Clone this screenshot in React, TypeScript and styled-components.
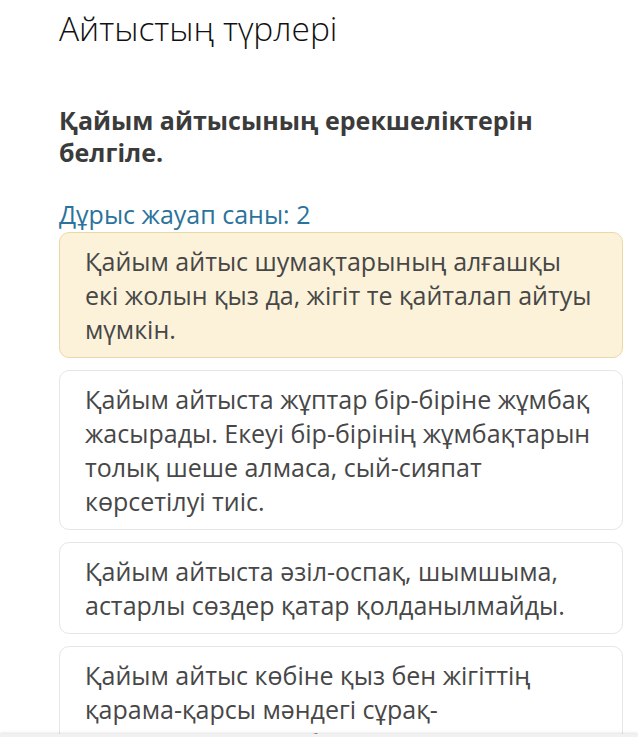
import styled, { createGlobalStyle } from 'styled-components';

const GlobalStyle = createGlobalStyle`
  html, body {
    margin: 0;
    padding: 0;
    background: #ffffff;
    overflow: hidden;
  }
  body {
    font-family: 'Open Sans', 'Noto Sans', sans-serif;
  }
`;

const options = [
  {
    text: 'Қайым айтыс шумақтарының алғашқы екі жолын қыз да, жігіт те қайталап айтуы мүмкін.',
    selected: true,
  },
  {
    text: 'Қайым айтыста жұптар бір-біріне жұмбақ жасырады. Екеуі бір-бірінің жұмбақтарын толық шеше алмаса, сый-сияпат көрсетілуі тиіс.',
    selected: false,
  },
  {
    text: 'Қайым айтыста әзіл-оспақ, шымшыма, астарлы сөздер қатар қолданылмайды.',
    selected: false,
  },
  {
    text: 'Қайым айтыс көбіне қыз бен жігіттің қарама-қарсы мәндегі сұрақ-жауаптарымен өрбиді.',
    selected: false,
  },
];

export default function App() {
  return (
    <>
      <GlobalStyle />
      <Page>
        <Title>Айтыстың түрлері</Title>
        <Question>Қайым айтысының ерекшеліктерін белгіле.</Question>
        <AnswerCount>Дұрыс жауап саны: 2</AnswerCount>
        <OptionList>
          {options.map((o) => (
            <Option key={o.text} $selected={o.selected}>
              {o.text}
            </Option>
          ))}
        </OptionList>
      </Page>
      <BottomBar />
    </>
  );
}

const Page = styled.div`
  display: flex;
  flex-direction: column;
  padding: 0 15px 0 59px;
  height: 737px;
  box-sizing: border-box;
`;

const Title = styled.h1`
  margin: 6px 0 0;
  font-weight: 300;
  font-size: 33.5px;
  line-height: 44px;
  color: #111111;
`;

const Question = styled.h2`
  margin: 54px 0 0;
  width: 520px;
  font-weight: 700;
  font-size: 25px;
  line-height: 32px;
  color: #3b3b3b;
`;

const AnswerCount = styled.div`
  margin-top: 30px;
  font-size: 25px;
  line-height: 32px;
  color: #2b739a;
`;

const OptionList = styled.div`
  display: flex;
  flex-direction: column;
  gap: 12px;
  margin-top: 2px;
`;

const Option = styled.div<{ $selected: boolean }>`
  padding: 11px 22px 11px 25px;
  border-radius: 10px;
  border: 1px solid ${(p) => (p.$selected ? '#ead9a6' : '#e6e6e6')};
  background: ${(p) => (p.$selected ? '#fcf2d9' : '#ffffff')};
  font-size: 25px;
  line-height: 34px;
  color: #474747;
`;

const BottomBar = styled.div`
  position: fixed;
  left: 0;
  right: 0;
  bottom: 0;
  height: 3px;
  background: #f1f1f1;
  box-shadow: 0 -1px 3px rgba(0, 0, 0, 0.12);
`;
